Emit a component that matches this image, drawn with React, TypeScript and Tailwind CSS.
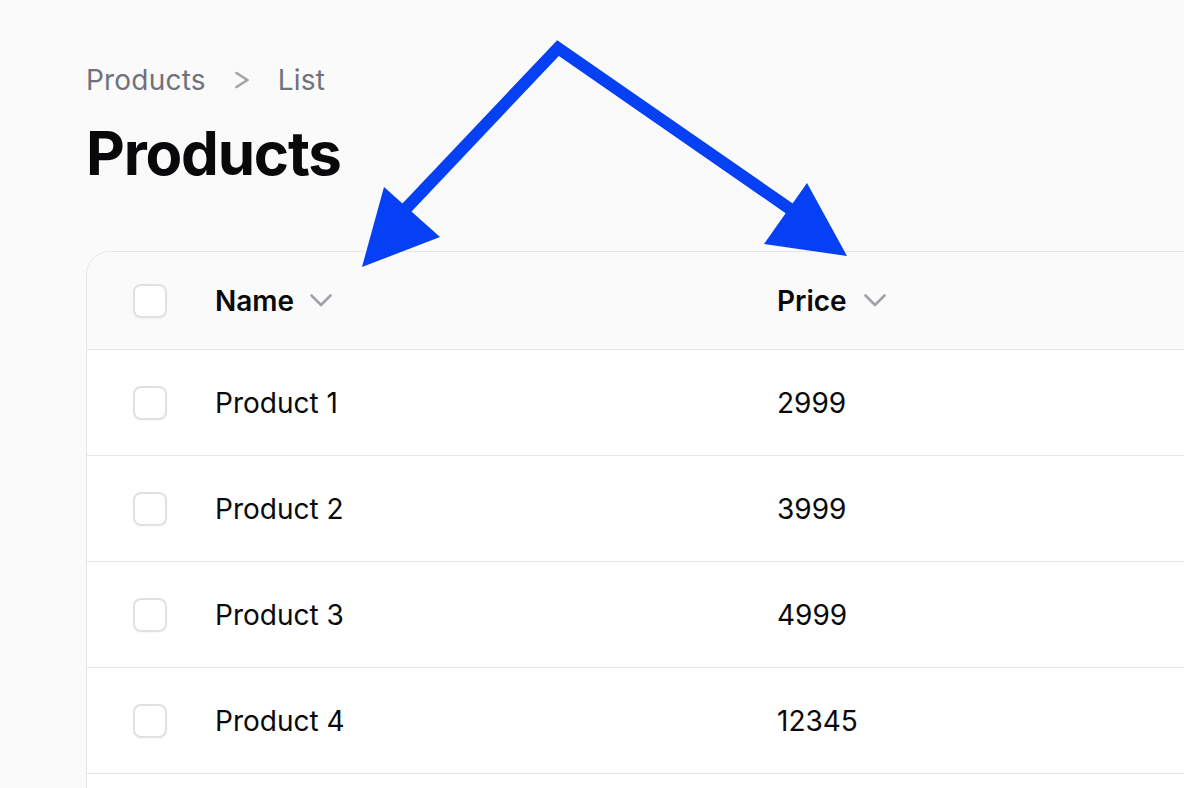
import React from "react";

function Checkbox() {
  return (
    <div className="h-[34px] w-[34px] shrink-0 rounded-[8px] border-2 border-[#e1e1e3] bg-white shadow-[0_1px_2px_rgba(0,0,0,0.04)]" />
  );
}

function ChevronDown() {
  return (
    <svg width="22" height="14" viewBox="0 0 22 14" className="shrink-0">
      <polyline points="1.5,1.5 11,11 20.5,1.5" fill="none" stroke="#a1a1aa" strokeWidth="2.6" strokeLinecap="round" strokeLinejoin="round" />
    </svg>
  );
}

export default function App() {
  const rows = [
    ["Product 1", "2999"],
    ["Product 2", "3999"],
    ["Product 3", "4999"],
    ["Product 4", "12345"],
  ];
  return (
    <div className="relative h-[788px] w-[1184px] overflow-hidden bg-[#fafafa] font-[Inter,sans-serif] text-[#09090b]">
      <div className="pl-[86px] pt-[60px]">
        <nav className="flex h-10 items-center text-[28px] leading-10 tracking-[0.2px] text-[#71717a]">
          <span>Products</span>
          <svg width="14" height="18" viewBox="0 0 14 18" className="ml-[29px] mr-[29px] shrink-0">
            <polyline points="1.5,2 12.5,9 1.5,16" fill="none" stroke="#a1a1aa" strokeWidth="2.6" strokeLinecap="round" strokeLinejoin="round" />
          </svg>
          <span>List</span>
        </nav>
        <h1 className="mt-[23px] text-[60px] font-bold leading-[60px] tracking-[-1.2px]">Products</h1>
        <div className="mt-[68px] w-[1200px] overflow-hidden rounded-tl-[24px] border border-[#e6e6e6] bg-white">
          <div className="flex h-[97px] items-center bg-[#fafafa] text-[28px] font-semibold leading-10">
            <div className="pl-[46px] pr-[48px]">
              <Checkbox />
            </div>
            <div className="flex w-[562px] items-center gap-[16px]">
              <span>Name</span>
              <ChevronDown />
            </div>
            <div className="flex items-center gap-[17px]">
              <span>Price</span>
              <ChevronDown />
            </div>
          </div>
          {rows.map(([name, price]) => (
            <div key={name} className="flex h-[106px] items-center border-t border-[#e6e6e6] text-[28px] leading-10">
              <div className="pl-[46px] pr-[48px]">
                <Checkbox />
              </div>
              <div className="w-[562px]">{name}</div>
              <div>{price}</div>
            </div>
          ))}
          <div className="h-[60px] border-t border-[#e6e6e6] bg-white" />
        </div>
      </div>
      <svg className="pointer-events-none absolute left-0 top-0" width="1184" height="788" viewBox="0 0 1184 788">
        <polyline points="398,217 558,48 793,211" fill="none" stroke="#0540f4" strokeWidth="12" strokeLinejoin="miter" />
        <polygon points="362,267 384,187 440,237" fill="#0540f4" />
        <polygon points="847,256 807,183 764,244" fill="#0540f4" />
      </svg>
    </div>
  );
}
